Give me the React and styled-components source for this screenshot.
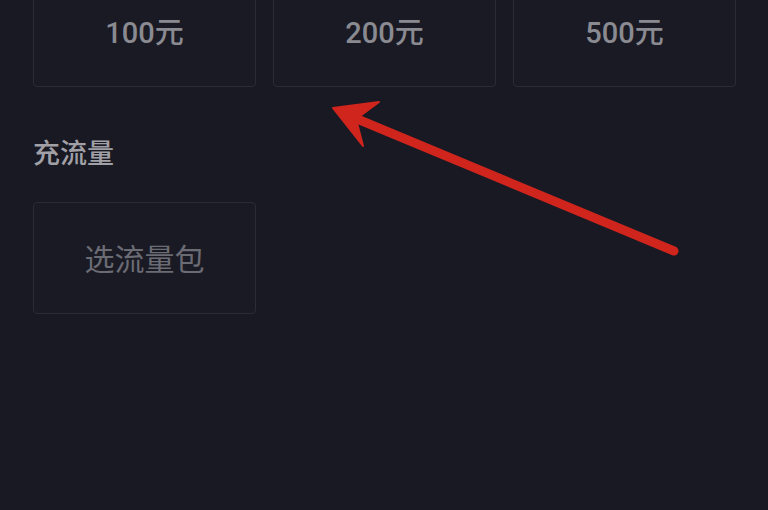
import React from 'react'
import styled, { createGlobalStyle } from 'styled-components'

const GlobalStyle = createGlobalStyle`
	html, body {
		margin: 0;
		padding: 0;
		background: #191923;
		overflow: hidden;
	}
	body {
		font-family: 'Noto Sans CJK SC', 'Noto Sans', sans-serif;
	}
`

const Page = styled.div`
	position: relative;
	width: 768px;
	height: 510px;
	overflow: hidden;
	background: #191923;
	padding: 0 32px 0 33px;
	box-sizing: border-box;
`

const OptionGrid = styled.div`
	display: grid;
	grid-template-columns: repeat(${props => props.cols || 3}, 223px);
	column-gap: 17px;
	margin-top: ${props => props.offset || 0}px;
`

const OptionCard = styled.div`
	height: 112px;
	box-sizing: border-box;
	border: 1px solid #2b2b36;
	border-radius: 4px;
	background: #1a1a25;
	display: flex;
	align-items: center;
	justify-content: center;
	padding-bottom: 2px;
	font-family: ${props => props.muted
		? "'Noto Sans CJK SC', sans-serif"
		: "Roboto, 'Noto Sans CJK SC', sans-serif"};
	color: ${props => props.muted ? '#6b6b73' : '#8a8a91'};
	font-size: ${props => props.muted ? '30px' : '29px'};
	font-weight: ${props => props.muted ? 400 : 500};
`

const SectionTitle = styled.div`
	color: #a0a0a6;
	font-size: 27px;
	font-weight: 500;
	line-height: 1;
	margin: 51px 0 37px;
`

const ArrowLayer = styled.svg`
	position: absolute;
	left: 0;
	top: 0;
	pointer-events: none;
`

const amounts = ['100元', '200元', '500元']

export default function App() {
	return (
		<>
			<GlobalStyle />
			<Page>
				<OptionGrid offset={-25}>
					{amounts.map(a => (
						<OptionCard key={a}>{a}</OptionCard>
					))}
				</OptionGrid>
				<SectionTitle>充流量</SectionTitle>
				<OptionGrid>
					<OptionCard muted>选流量包</OptionCard>
				</OptionGrid>
				<ArrowLayer width="768" height="510" viewBox="0 0 768 510">
					<line
						x1="674"
						y1="251"
						x2="350"
						y2="116"
						stroke="#cf251d"
						strokeWidth="9"
						strokeLinecap="round"
					/>
					<path
						d="M333 108 L379 102 L356 119 L363 146 Z"
						fill="#cf251d"
						stroke="#cf251d"
						strokeWidth="2"
						strokeLinejoin="round"
					/>
				</ArrowLayer>
			</Page>
		</>
	)
}
